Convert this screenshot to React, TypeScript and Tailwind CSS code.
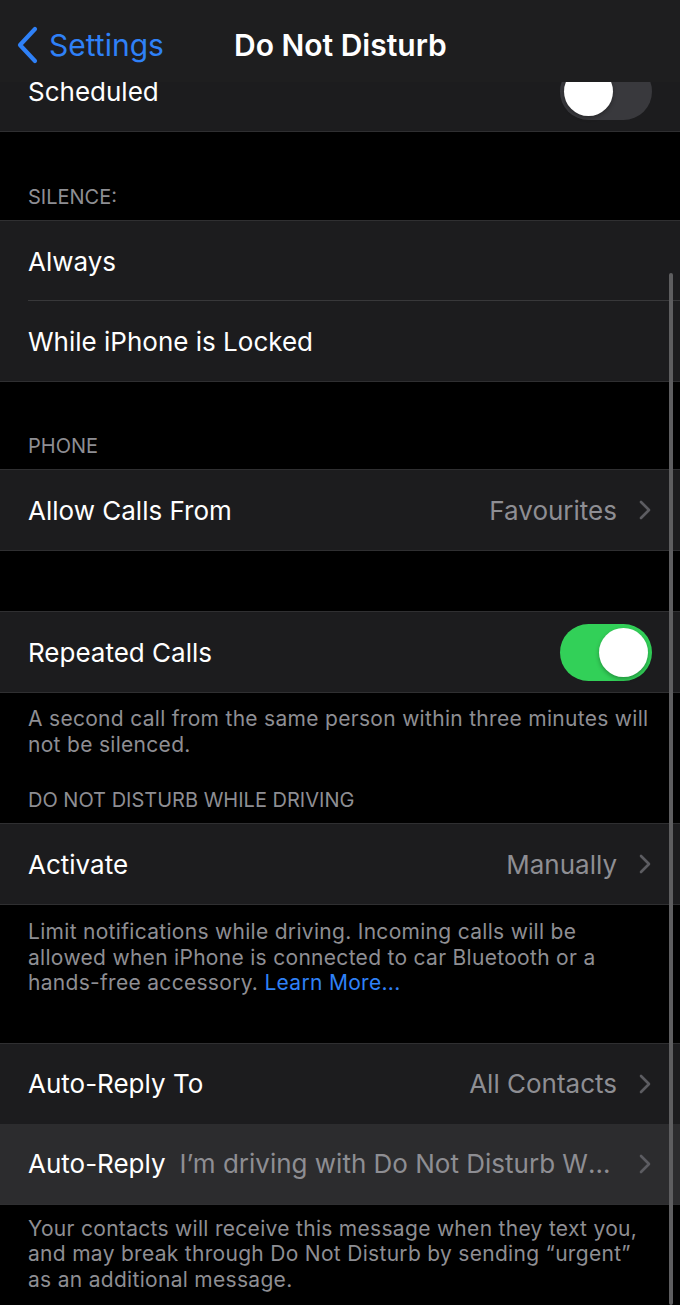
import React from "react";

const font = { fontFamily: "Inter, 'Noto Sans', sans-serif" };

function Chevron() {
  return (
    <svg width="14" height="22" viewBox="0 0 14 22" className="shrink-0">
      <path d="M3 3 L11 11 L3 19" fill="none" stroke="#5c5c61" strokeWidth="2.6" strokeLinecap="round" strokeLinejoin="round" />
    </svg>
  );
}

function Toggle({ on }: { on: boolean }) {
  return (
    <div
      className={`w-[92px] h-[57px] rounded-full p-[4px] flex items-center ${on ? "bg-[#32d058] justify-end" : "bg-[#39393d] justify-start"}`}
    >
      <div className="w-[49px] h-[49px] rounded-full bg-white shadow-[0_2px_4px_rgba(0,0,0,0.3)]" />
    </div>
  );
}

function Row({
  label,
  value,
  chevron,
  toggle,
  highlight,
  separator,
}: {
  label: string;
  value?: string;
  chevron?: boolean;
  toggle?: boolean;
  highlight?: boolean;
  separator?: boolean;
}) {
  return (
    <div className={`relative h-[80px] flex items-center pl-[28px] pr-[28px] ${highlight ? "bg-[#2c2c2e]" : "bg-[#1c1c1e]"}`}>
      <span className="text-[26px] text-white whitespace-nowrap">{label}</span>
      {value && (
        <span className={`text-[26px] text-[#8e8e93] whitespace-nowrap truncate ${highlight ? "ml-[14px] flex-1 min-w-0" : "ml-auto"}`}>
          {value}
        </span>
      )}
      {chevron && <span className="ml-[21px]"><Chevron /></span>}
      {toggle !== undefined && <span className="ml-auto"><Toggle on={toggle} /></span>}
      {separator && <div className="absolute left-[28px] right-0 bottom-0 h-px bg-[#38383a]" />}
    </div>
  );
}

function Group({ children }: { children: React.ReactNode }) {
  return <div className="border-y border-[#2f2f31]">{children}</div>;
}

function Header({ text, height }: { text: string; height: string }) {
  return (
    <div className={`${height} flex items-end pl-[28px] pb-[11px] text-[20px] text-[#8e8e93] leading-[24px]`}>{text}</div>
  );
}

function Footer({ children, pt }: { children: React.ReactNode; pt: string }) {
  return <div className={`${pt} px-[28px] text-[21px] tracking-[0.3px] leading-[25.5px] text-[#8e8e93]`}>{children}</div>;
}

export default function App() {
  return (
    <div className="relative w-[680px] h-[1305px] bg-black overflow-hidden" style={font}>
      <div className="h-[82px] pt-[8px] bg-[#1e1e1f] flex items-center relative">
        <div className="flex items-center pl-[16px] gap-[9px]">
          <svg width="24" height="38" viewBox="0 0 24 38">
            <path d="M19 3 L4 19 L19 35" fill="none" stroke="#2f81f7" strokeWidth="4.2" strokeLinecap="round" strokeLinejoin="round" />
          </svg>
          <span className="text-[30px] text-[#2f81f7]">Settings</span>
        </div>
        <span className="absolute left-[234px] text-[30px] font-semibold text-white">Do Not Disturb</span>
      </div>

      <div className="h-[50px] overflow-hidden border-b border-[#2f2f31]">
        <div className="-mt-[31px]">
          <Row label="Scheduled" toggle={false} />
        </div>
      </div>

      <Header text="SILENCE:" height="h-[88px]" />
      <Group>
        <Row label="Always" separator />
        <Row label="While iPhone is Locked" />
      </Group>

      <Header text="PHONE" height="h-[87px]" />
      <Group>
        <Row label="Allow Calls From" value="Favourites" chevron />
      </Group>

      <div className="h-[60px]" />
      <Group>
        <Row label="Repeated Calls" toggle />
      </Group>
      <Footer pt="pt-[13px]">
        A second call from the same person within three minutes will not be silenced.
      </Footer>

      <Header text="DO NOT DISTURB WHILE DRIVING" height="h-[66px]" />
      <Group>
        <Row label="Activate" value="Manually" chevron />
      </Group>
      <Footer pt="pt-[14px]">
        Limit notifications while driving. Incoming calls will be allowed when iPhone is connected to car Bluetooth or a hands-free accessory.{" "}
        <span className="text-[#2f81f7]">Learn More...</span>
      </Footer>

      <div className="h-[47px]" />
      <Group>
        <Row label="Auto-Reply To" value="All Contacts" chevron />
        <Row label="Auto-Reply" value="I’m driving with Do Not Disturb While Driving turned on" chevron highlight />
      </Group>
      <Footer pt="pt-[11px]">
        Your contacts will receive this message when they text you, and may break through Do Not Disturb by sending “urgent” as an additional message.
      </Footer>

      <div className="absolute right-[7px] top-[273px] bottom-0 w-[4px] rounded-full bg-[#5e5e60]" />
    </div>
  );
}
